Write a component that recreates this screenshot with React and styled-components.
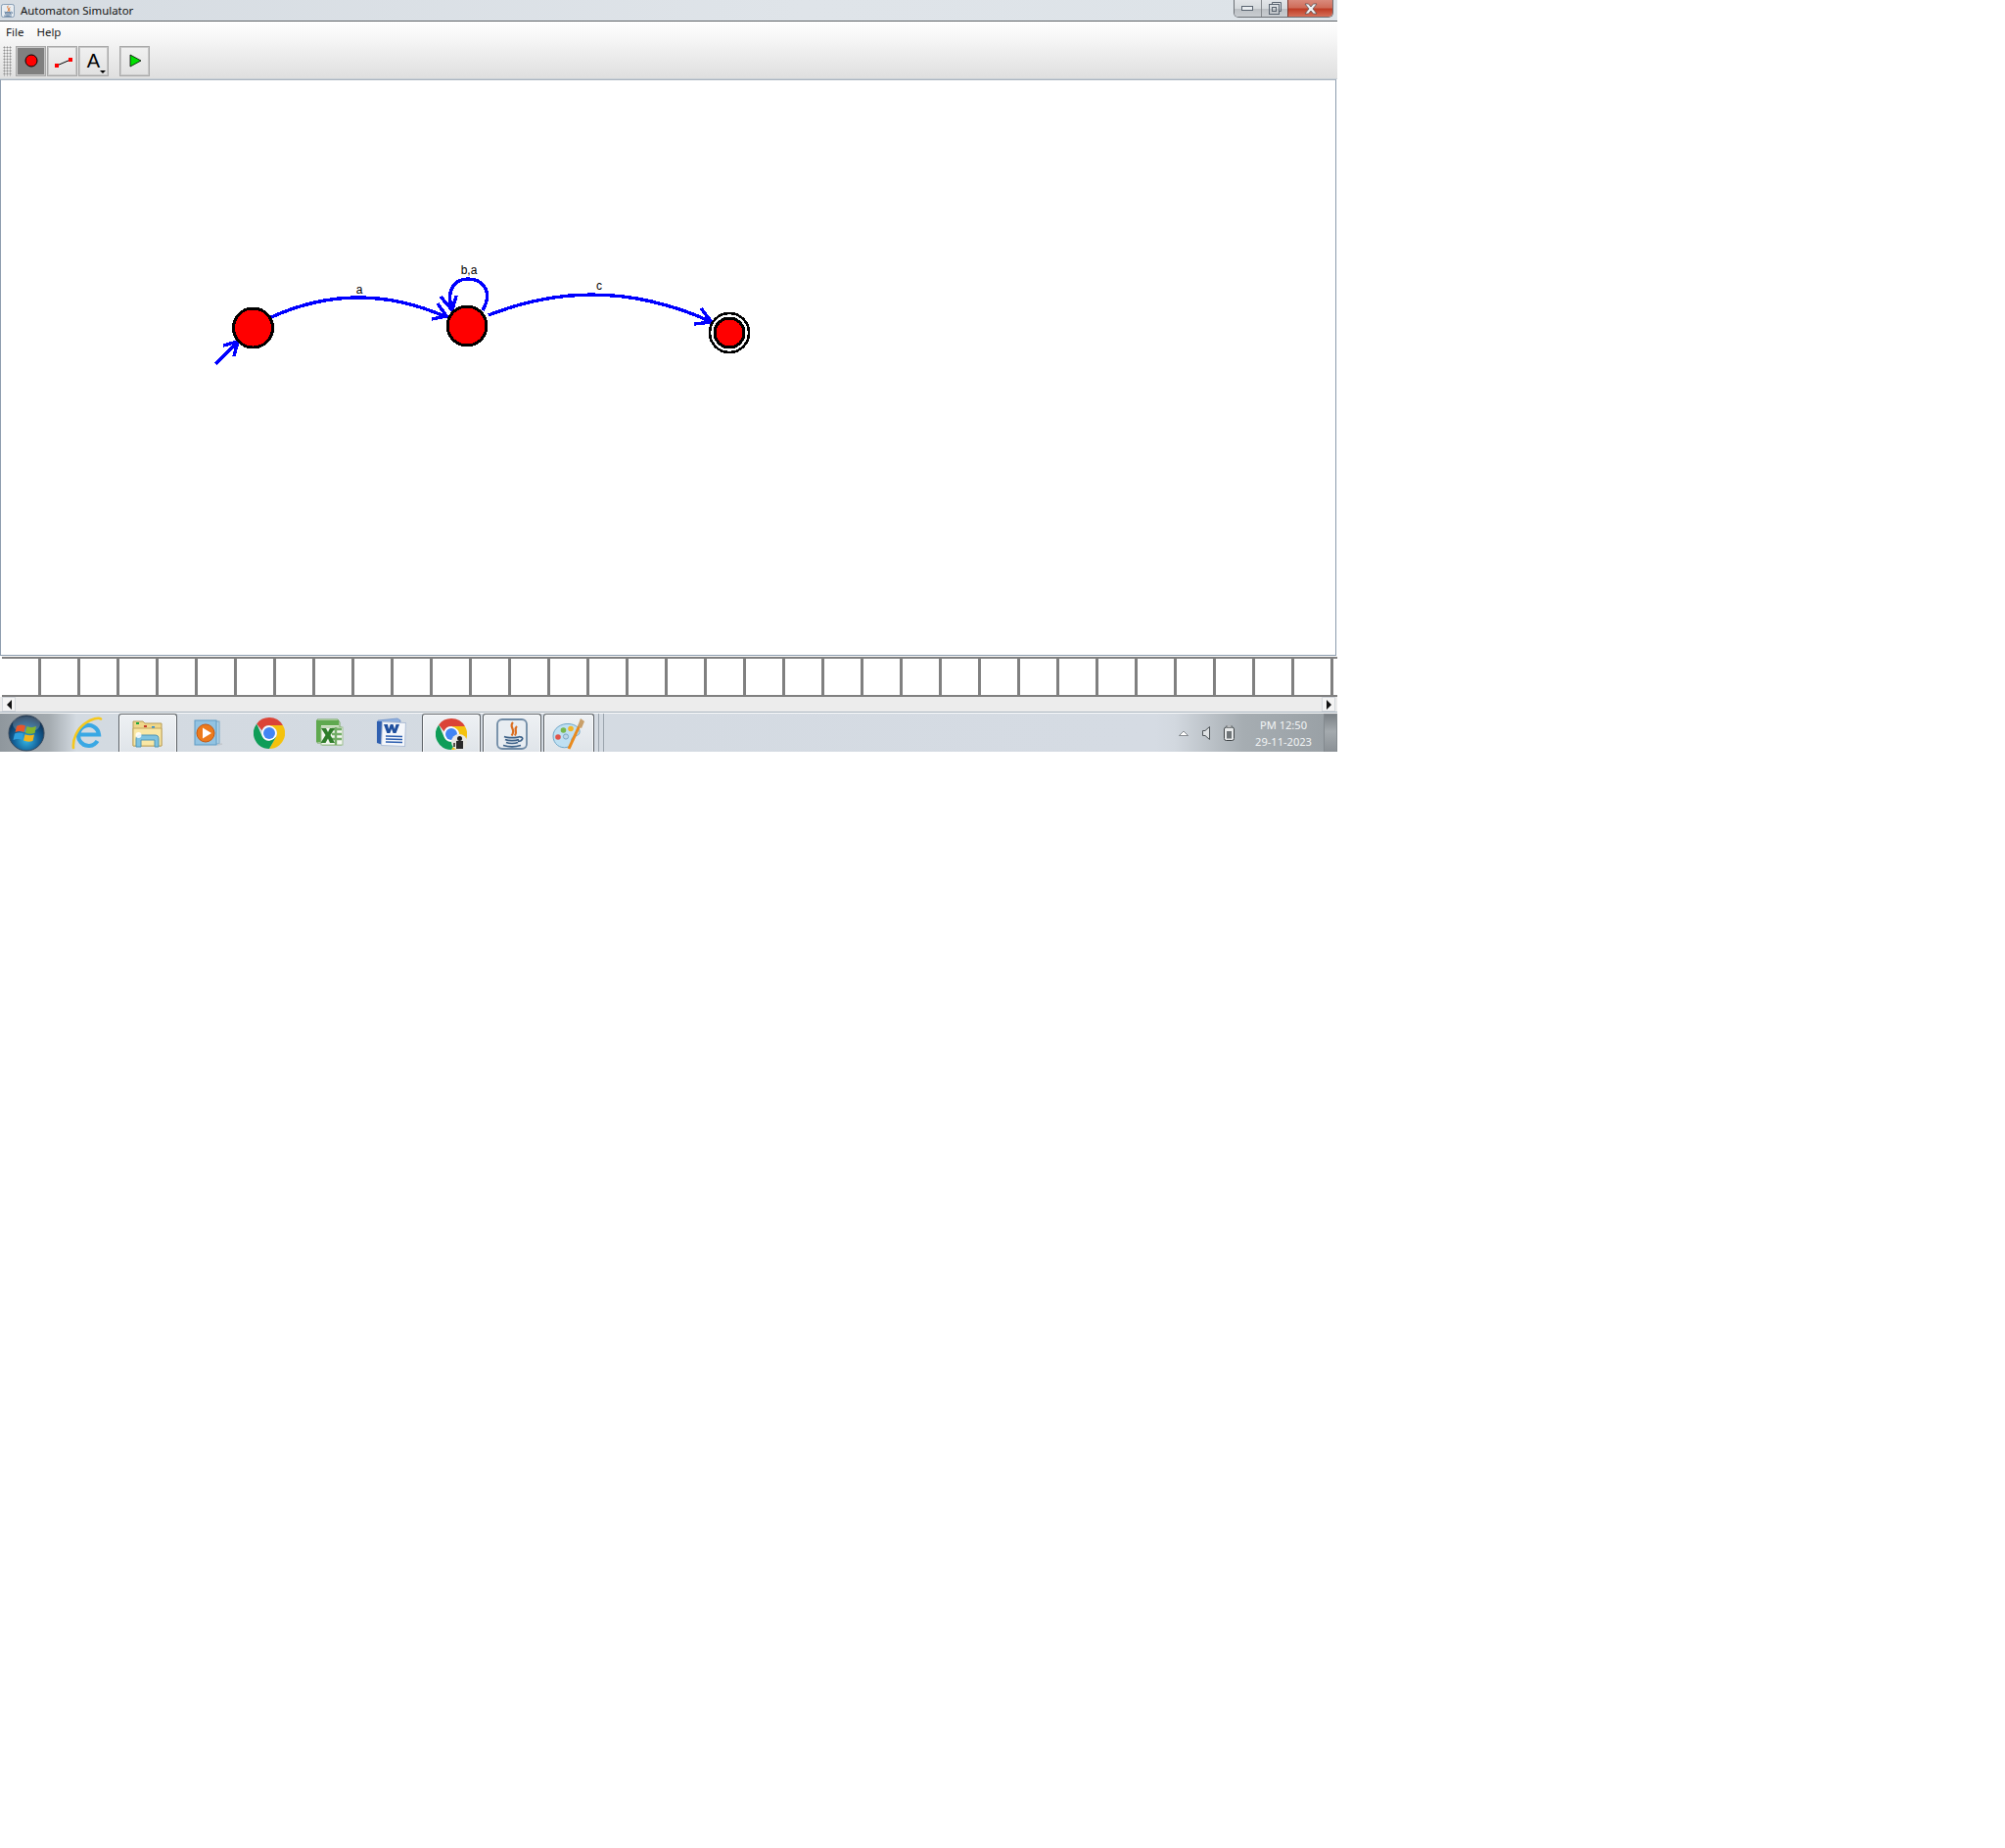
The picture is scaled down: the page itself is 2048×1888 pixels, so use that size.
import React from "react";
import styled, { createGlobalStyle } from "styled-components";

const Global = createGlobalStyle`
  html, body { margin: 0; padding: 0; background: #fff; }
  body { font-family: "Liberation Sans", Arial, sans-serif; }
`;

const Desktop = styled.div`
  width: 1366px;
  height: 768px;
  display: flex;
  flex-direction: column;
  overflow: hidden;
`;

const TitleBar = styled.div`
  height: 21px;
  flex: none;
  display: flex;
  align-items: flex-start;
  justify-content: space-between;
  background: linear-gradient(90deg, #d6dce2 0%, #dfe4e9 60%, #dde3e8 100%);
  border-bottom: 1px solid #5f6468;
`;
const TitleLeft = styled.div`
  display: flex;
  align-items: center;
  height: 21px;
  padding-left: 1px;
  gap: 6px;
`;
const TitleText = styled.span`
  font: 11.4px "Noto Sans", sans-serif;
  color: #111;
`;
const WinButtons = styled.div`
  display: flex;
  height: 17px;
  margin-right: 4px;
  border: 1px solid #6c7075;
  border-top: none;
  border-radius: 0 0 5px 5px;
  overflow: hidden;
`;
const WinButton = styled.div`
  width: ${p => p.$w}px;
  box-sizing: border-box;
  display: flex;
  align-items: center;
  justify-content: center;
  background: ${p => p.$close
    ? "linear-gradient(180deg, #d98a7c 0%, #cf6d5a 45%, #bf3d26 55%, #d5705a 100%)"
    : "linear-gradient(180deg, #e2e5e8 0%, #d6dadd 50%, #bcc0c4 55%, #c9cdd1 100%)"};
  border-left: ${p => p.$first ? "none" : `1px solid ${p.$close ? "#7a3a30" : "#85898d"}`};
`;

const Chrome = styled.div`
  height: 58px;
  flex: none;
  background: linear-gradient(180deg, #ffffff 0%, #f6f6f6 30%, #dfdfdf 100%);
  display: flex;
  flex-direction: column;
  border-bottom: 1px solid #c9d0d6;
`;
const MenuBar = styled.div`
  height: 24px;
  box-sizing: border-box;
  display: flex;
  align-items: center;
  padding: 0 0 3px 6px;
  gap: 13px;
`;
const MenuItem = styled.span`
  font: 11.5px "Noto Sans", sans-serif;
  color: #1c1c1c;
`;
const ToolBar = styled.div`
  height: 32px;
  display: flex;
  align-items: center;
  padding-left: 3px;
`;
const Grip = styled.div`
  width: 9px;
  height: 31px;
  margin-right: 4px;
  background-image: radial-gradient(#8e8e8e 0.9px, transparent 1.1px);
  background-size: 3px 3px;
`;
const ToolButton = styled.div`
  position: relative;
  width: 29px;
  height: 29px;
  flex: none;
  display: flex;
  align-items: center;
  justify-content: center;
  border: 1px solid #a8a8a8;
  box-shadow: inset 0 0 0 1px #c8c8c8;
  margin-right: ${p => p.$mr || 1}px;
  background: ${p => p.$active ? "#808080" : "transparent"};
`;
const GlyphA = styled.span`
  font: 20px "Liberation Sans", sans-serif;
  color: #000;
  line-height: 1;
  margin-top: -1px;
`;
const DropCaret = styled.span`
  position: absolute;
  right: 2px;
  bottom: 2px;
  width: 0;
  height: 0;
  border-left: 3px solid transparent;
  border-right: 3px solid transparent;
  border-top: 3px solid #000;
`;
const LineIcon = styled.svg`
  margin: 3px 0 0 2px;
`;
const PlayIcon = styled.svg`
  margin-left: 2px;
`;

const Canvas = styled.div`
  width: 1365px;
  height: 589px;
  flex: none;
  box-sizing: border-box;
  background: #fff;
  border: 1px solid #8c9cae;
  border-top-color: #aab4c0;
`;
const Diagram = styled.svg`
  display: block;
  margin: -82px 0 0 -1px;
`;
const EdgeLabel = styled.text`
  font: 12px "Liberation Sans", sans-serif;
  fill: #000;
  text-anchor: middle;
`;

const Tape = styled.div`
  display: flex;
  height: 41px;
  flex: none;
  margin-top: 1px;
  padding-left: 2px;
  overflow: hidden;
`;
const TapeCell = styled.div`
  width: 40px;
  height: 41px;
  flex: none;
  box-sizing: border-box;
  border: solid #808080;
  border-width: 2px 3px 2px 0;
  background: #fff;
`;

const ScrollBar = styled.div`
  height: 15px;
  flex: none;
  display: flex;
  justify-content: space-between;
  background: #ececec;
  border-bottom: 1px solid #a4b0bc;
  padding: 0 2px;
`;
const ScrollButton = styled.div`
  width: 14px;
  display: flex;
  align-items: center;
  justify-content: center;
  background: #f4f4f4;
  box-shadow: inset 0 0 0 1px #d4d8dc;
`;
const ScrollArrow = styled.span`
  width: 0;
  height: 0;
  border-top: 5px solid transparent;
  border-bottom: 5px solid transparent;
  ${p => p.$right ? "border-left: 5px solid #111;" : "border-right: 5px solid #111;"}
`;

const Taskbar = styled.div`
  height: 40px;
  flex: none;
  margin-top: 1px;
  display: flex;
  align-items: stretch;
  background: linear-gradient(90deg, #8f979d 0, #a4abb0 50px, #d3dae1 78px, #d5dbe3 1180px, #d2d8df 1200px, #a6adb2 1270px, #9aa1a6 1352px);
`;
const StartSlot = styled.div`
  width: 54px;
  margin-right: 5px;
  display: flex;
  align-items: center;
  justify-content: center;
`;
const TaskSlot = styled.div`
  width: ${p => p.$w || 60}px;
  flex: none;
  margin-right: 2px;
  display: flex;
  align-items: center;
  justify-content: center;
  box-sizing: border-box;
  ${p => p.$open && `
    border: 1px solid #5c6166;
    border-bottom: none;
    border-radius: 3px 3px 0 0;
    box-shadow: inset 0 0 0 1px rgba(255,255,255,.65);
    background: linear-gradient(180deg, #eef1f4 0%, #dfe4e9 100%);
  `}
`;
const Separators = styled.div`
  width: 4px;
  margin-left: 2px;
  border-left: 1px solid #9aa3ac;
  border-right: 1px solid #9aa3ac;
`;
const Spacer = styled.div`
  flex: 1;
`;
const Tray = styled.div`
  display: flex;
  align-items: center;
  gap: 14px;
  margin-right: 5px;
`;
const Clock = styled.div`
  width: 72px;
  text-align: center;
  font: 11.1px/17px "Noto Sans", sans-serif;
  color: #f2f4f5;
`;
const ShowDesktop = styled.div`
  width: 14px;
  flex: none;
  box-sizing: border-box;
  border: 1px solid #83898e;
  background: linear-gradient(180deg, #7b8186 0%, #a4aaae 45%, #8a9095 100%);
`;

const BLUE = "#0000ff";

function Node({ cx, cy, accepting }) {
  return (
    <g>
      {accepting && <circle cx={cx} cy={cy} r="20" fill="#fff" stroke="#000" strokeWidth="2.6" />}
      <circle cx={cx} cy={cy} r={accepting ? 15 : 20} fill="#ff0000" stroke="#000" strokeWidth="3" />
    </g>
  );
}

function Automaton() {
  return (
    <Diagram width="1365" height="670" viewBox="0 0 1365 670" shapeRendering="crispEdges">
      <g fill="none" stroke={BLUE} strokeWidth="3.4">
        <path d="M220 372L243 349M228 353L243 349L239 364" />
        <path d="M277 324Q366 284 456 324" />
        <path d="M441 326L456 323L447 310" />
        <path d="M493 317C505 296 491 285 478 285C464 285 455 297 462 317" />
        <path d="M450 303L462 317L466 302" />
        <path d="M499 322Q613 277 727 329" />
        <path d="M709 331L727 329L716 315" />
      </g>
      <Node cx={258.500} cy={335} />
      <Node cx={477} cy={333} />
      <Node cx={745} cy={340} accepting />
      <EdgeLabel x="367" y="300">a</EdgeLabel>
      <EdgeLabel x="479" y="280">b,a</EdgeLabel>
      <EdgeLabel x="612" y="296">c</EdgeLabel>
    </Diagram>
  );
}

function JavaBadge({ size = 16 }) {
  return (
    <svg width={size} height={size} viewBox="0 0 32 32">
      <rect x="1" y="1" width="30" height="30" rx="5" fill="#e8edf2" stroke="#6f8aa5" strokeWidth="1.8" />
      <path d="M17 4C12 9 21 11 15.500 17.500M21 8C17.500 11 22 13 19 17.500" fill="none" stroke="#db6d1f" strokeWidth="2.200" />
      <path d="M8 18.500C11 20 21 20 24 18.500M9 21.500C12 23 20 23 23 21.500M10 24.500C13 25.800 19 25.800 22 24.500M7 27.500C12 29 20 29 25 27.500M24 19C28.500 18.500 27 23.500 22 23.500" fill="none" stroke="#3a5f86" strokeWidth="1.700" />
    </svg>
  );
}

function Orb() {
  return (
    <svg width="38" height="38" viewBox="0 0 38 38">
      <defs>
        <radialGradient id="orb" cx="50%" cy="70%" r="65%">
          <stop offset="0" stopColor="#35b7e6" />
          <stop offset="0.55" stopColor="#135f96" />
          <stop offset="1" stopColor="#0b2b4c" />
        </radialGradient>
      </defs>
      <circle cx="19" cy="19" r="18" fill="url(#orb)" stroke="#37475a" />
      <ellipse cx="19" cy="10" rx="14" ry="8" fill="#fff" opacity=".22" />
      <path d="M9 12C12 10 15 10 18 11.5L16.5 18C14 16.5 11 16.5 7.5 18Z" fill="#e8562a" />
      <path d="M19.5 12C22 13.5 26 13.5 29 12L27.5 19C24.5 20 21 20 18 18.8Z" fill="#86b52c" />
      <path d="M7 19.5C10 18 13.5 18 16 19.5L14.5 26C12 24.5 9 24.5 5.5 26Z" fill="#2f9fdd" />
      <path d="M17.5 20.3C20.5 21.5 24 21.5 27 20.5L25.5 27C22.5 28 19 28 16 26.6Z" fill="#f3b51c" />
    </svg>
  );
}

function IE() {
  return (
    <svg width="32" height="34" viewBox="0 0 32 34">
      <path d="M26.500 25A10.500 10.500 0 1 1 28 18.500H8" fill="none" stroke="#3aa8e4" strokeWidth="4.200" />
      <path d="M30 2.500C28 1 21 2 14 7C6 12.500 1 23 2 32" fill="none" stroke="#f5c81e" strokeWidth="2.600" strokeLinecap="round" />
    </svg>
  );
}

function Explorer() {
  return (
    <svg width="32" height="28" viewBox="0 0 32 28">
      <path d="M1 1H11L13 3H30V26H1Z" fill="#efd78a" stroke="#b89c55" />
      <rect x="4" y="2" width="3" height="2" fill="#1ca83c" />
      <rect x="12" y="5" width="3" height="2" fill="#c43b2a" />
      <rect x="20" y="6" width="3" height="2" fill="#2d8fd8" />
      <path d="M1 8H30V26H1Z" fill="#f9e7a5" stroke="#c2a65f" />
      <path d="M4 27V19C4 16 6 15 8 15H23C26 15 27 16 27 19V27H23V20H9V27Z" fill="#7fc3e0" stroke="#4d94b6" />
      <circle cx="6.500" cy="15" r="3" fill="#fff" opacity=".85" />
    </svg>
  );
}

function Wmp() {
  return (
    <svg width="30" height="30" viewBox="0 0 30 30">
      <rect x="9" y="3" width="17" height="23" fill="#b3d4e8" stroke="#7ba7c5" />
      <rect x="1" y="2" width="22" height="25" fill="#92c3e2" stroke="#5d9ac4" />
      <circle cx="12" cy="15" r="9" fill="#ec7a1c" stroke="#c8570d" />
      <path d="M9 9.500L18 15L9 20.500Z" fill="#fff" />
      <path d="M24 27L29 26" stroke="#c2c7cc" strokeWidth="1.5" />
    </svg>
  );
}

function ChromeLogo({ avatar }) {
  return (
    <svg width="32" height="32" viewBox="0 0 32 32">
      <path d="M16 0A16 16 0 0 1 29.9 8H16A8 8 0 0 0 8.500 13.200L3.200 6.400A16 16 0 0 1 16 0Z" fill="#db4437" />
      <path d="M29.900 8A16 16 0 0 1 16 32L22.900 20A8 8 0 0 0 22.900 12L16 8Z" fill="#f4c20d" />
      <path d="M3.200 6.400L9.100 20A8 8 0 0 0 16 24L22.900 20L16 32A16 16 0 0 1 3.200 6.400Z" fill="#0f9d58" />
      <circle cx="16" cy="16" r="7.600" fill="#fff" />
      <circle cx="16" cy="16" r="6" fill="#4285f4" />
      {avatar && (
        <g>
          <circle cx="24" cy="24" r="8" fill="#e8e8e4" />
          <rect x="21" y="23" width="7" height="8" fill="#2a2a2a" />
          <circle cx="24.500" cy="20.500" r="2.500" fill="#1e1e1e" />
          <rect x="18" y="25" width="2" height="4" fill="#55504a" />
        </g>
      )}
    </svg>
  );
}

function Excel() {
  return (
    <svg width="32" height="32" viewBox="0 0 32 32">
      <path d="M3 2H24L26 5V10H28V28H8V26H3Z" fill="#dcebd3" stroke="#6fa55c" />
      <path d="M2 3H25V8H7V25H2Z" fill="#5fa94f" />
      <rect x="7" y="10" width="22" height="18" fill="#f4f7f1" stroke="#9dbf90" />
      <path d="M18 12H28M18 17H28M18 22H28M22 10V28" stroke="#72ad66" strokeWidth="2.400" />
      <path d="M7 11H12L14 15L16 11H21L16.500 18L21 26H16L14 21.500L11.500 26H6.500L11.500 18Z" fill="#2f7d2a" />
    </svg>
  );
}

function Word() {
  return (
    <svg width="32" height="32" viewBox="0 0 32 32">
      <path d="M3 3L23 1L26 3V5H3Z" fill="#8fb0e0" stroke="#5a82c0" strokeWidth=".6" />
      <path d="M2 4H8V28L2 26Z" fill="#2f5fb0" />
      <rect x="7" y="5" width="24" height="24" fill="#f5f7fb" stroke="#b0bfd6" transform="rotate(2 19 17)" />
      <path d="M9 7H13L14 12L15.800 7H18.500L20 12L21.500 7H25L21.500 16H18.500L17 11.500L15.300 16H12.300Z" fill="#1f4f9e" />
      <path d="M11 19L28 19.500M11 22L28 22.500M11 25L28 25.500" stroke="#2a5cae" strokeWidth="1.600" />
    </svg>
  );
}

function Palette() {
  return (
    <svg width="34" height="32" viewBox="0 0 34 32">
      <path d="M1 18C1 10 9 5 17 5.500C24 6 29 10 28 14.500C27 19 21 17 20 21C19 25 21 28 15 29.500C8 31 1 26 1 18Z" fill="#bfe0f2" stroke="#6ea6c8" />
      <circle cx="6" cy="19" r="2.800" fill="#e0544a" />
      <circle cx="11.500" cy="12" r="2.800" fill="#78b84c" />
      <circle cx="19" cy="10.500" r="2.800" fill="#f3b52a" />
      <circle cx="14" cy="18.500" r="2.600" fill="#bcd6e6" stroke="#7ba7c5" />
      <path d="M28 7L17 31" stroke="#e98a1d" strokeWidth="3" />
      <path d="M26 8L29 0L33 3L30 10Z" fill="#c9a06a" />
    </svg>
  );
}

export default function App() {
  return (
    <>
      <Global />
      <Desktop>
        <TitleBar>
          <TitleLeft>
            <JavaBadge size={14} />
            <TitleText>Automaton Simulator</TitleText>
          </TitleLeft>
          <WinButtons>
            <WinButton $w={27} $first>
              <svg width="13" height="6" viewBox="0 0 13 6"><rect x=".5" y=".5" width="11" height="4" fill="#e9edf0" stroke="#5a6470" /></svg>
            </WinButton>
            <WinButton $w={27}>
              <svg width="13" height="13" viewBox="0 0 13 13" fill="none" stroke="#5a6470"><path d="M3.500 2.500V.5H12.500V9.500H10.500" /><rect x=".5" y="2.500" width="10" height="10" /><rect x="3.500" y="5.500" width="4" height="4" /></svg>
            </WinButton>
            <WinButton $w={46} $close>
              <svg width="14" height="12" viewBox="0 0 14 12"><path d="M1 1H4.500L7 4L9.500 1H13L9 6L13 11H9.500L7 8L4.500 11H1L5 6Z" fill="#f2f3f5" stroke="#4c4c50" strokeWidth=".7" /></svg>
            </WinButton>
          </WinButtons>
        </TitleBar>
        <Chrome>
          <MenuBar>
            <MenuItem>File</MenuItem>
            <MenuItem>Help</MenuItem>
          </MenuBar>
          <ToolBar>
            <Grip />
            <ToolButton $active>
              <svg width="14" height="14" viewBox="0 0 14 14"><circle cx="7" cy="7" r="6" fill="#ff0000" stroke="#000" /></svg>
            </ToolButton>
            <ToolButton>
              <LineIcon width="18" height="10" viewBox="0 0 18 10"><path d="M2 8L16 2" stroke="#000" /><rect x="0" y="6" width="4" height="4" fill="#f00" /><rect x="14" y="0" width="4" height="4" fill="#f00" /></LineIcon>
            </ToolButton>
            <ToolButton $mr={11}>
              <GlyphA>A</GlyphA>
              <DropCaret />
            </ToolButton>
            <ToolButton>
              <PlayIcon width="13" height="14" viewBox="0 0 13 14"><path d="M1 1L12 7L1 13Z" fill="#00e000" stroke="#000" strokeWidth=".8" /></PlayIcon>
            </ToolButton>
          </ToolBar>
        </Chrome>
        <Canvas><Automaton /></Canvas>
        <Tape>
          {Array.from({ length: 35 }, (_, i) => <TapeCell key={i} />)}
        </Tape>
        <ScrollBar>
          <ScrollButton><ScrollArrow /></ScrollButton>
          <ScrollButton><ScrollArrow $right /></ScrollButton>
        </ScrollBar>
        <Taskbar>
          <StartSlot><Orb /></StartSlot>
          <TaskSlot><IE /></TaskSlot>
          <TaskSlot $open><Explorer /></TaskSlot>
          <TaskSlot><Wmp /></TaskSlot>
          <TaskSlot><ChromeLogo /></TaskSlot>
          <TaskSlot><Excel /></TaskSlot>
          <TaskSlot><Word /></TaskSlot>
          <TaskSlot $open><ChromeLogo avatar /></TaskSlot>
          <TaskSlot $open><JavaBadge size={32} /></TaskSlot>
          <TaskSlot $open $w={52}><Palette /></TaskSlot>
          <Separators />
          <Spacer />
          <Tray>
            <svg width="10" height="6" viewBox="0 0 10 6"><path d="M.5 5.500L5 1L9.500 5.500Z" fill="#fff" stroke="#5d6367" strokeWidth=".7" /></svg>
            <svg width="8" height="14" viewBox="0 0 8 14"><path d="M.5 4.500H3L7.500 .5V13.500L3 9.500H.5Z" fill="#dfe2e4" stroke="#4e5458" /></svg>
            <svg width="11" height="16" viewBox="0 0 11 16"><rect x=".5" y="2" width="10" height="13.500" rx="2" fill="#e8eaeb" stroke="#3f4447" /><rect x="3" y="0" width="5" height="2" fill="#e8eaeb" stroke="#3f4447" strokeWidth=".6" /><rect x="3" y="6" width="5" height="7.500" fill="#6f7578" /></svg>
            <Clock>PM 12:50<br />29-11-2023</Clock>
          </Tray>
          <ShowDesktop />
        </Taskbar>
      </Desktop>
    </>
  );
}
